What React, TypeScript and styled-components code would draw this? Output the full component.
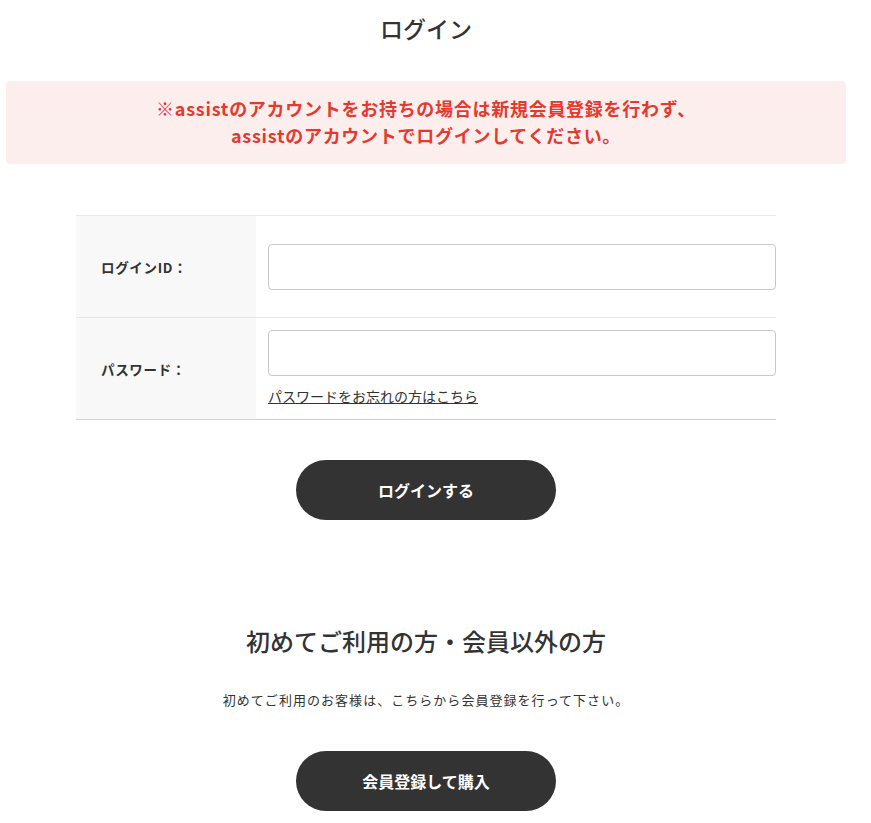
import React from 'react';
import styled, { createGlobalStyle } from 'styled-components';

const GlobalStyle = createGlobalStyle`
  body {
    margin: 0;
    background: #fff;
    color: #333;
    font-family: "Noto Sans CJK JP", "Noto Sans", sans-serif;
  }
  * { box-sizing: border-box; }
`;

const Page = styled.main`
  width: 840px;
  margin-left: 6px;
  padding-bottom: 12px;
`;

const Title = styled.h1`
  margin: 0;
  padding-top: 11px;
  font-size: 23px;
  line-height: 34px;
  font-weight: 500;
  text-align: center;
`;

const Notice = styled.div`
  margin-top: 36px;
  background: #fdeeee;
  border-radius: 4px;
  padding: 14px 0 15px;
  color: #e5392e;
  font-size: 18px;
  letter-spacing: 0.04em;
  font-weight: 700;
  line-height: 27px;
  text-align: center;
`;

const FormTable = styled.div`
  width: 700px;
  margin: 51px auto 0;
  border-top: 1px solid #e6e6e6;
  border-bottom: 1px solid #d2d2d2;
`;

const Row = styled.div`
  display: flex;
  & + & {
    border-top: 1px solid #e6e6e6;
  }
`;

const Label = styled.div`
  width: 180px;
  flex-shrink: 0;
  background: #f8f8f8;
  padding-left: 25px;
  display: flex;
  align-items: center;
  font-size: 13.5px;
  letter-spacing: 0.05em;
  font-weight: 700;
`;

const Field = styled.div<{ $top: number; $bottom: number }>`
  flex: 1;
  padding: ${p => p.$top}px 0 ${p => p.$bottom}px 12px;
`;

const Input = styled.input`
  display: block;
  width: 100%;
  height: 46px;
  border: 1px solid #c8c8c8;
  border-radius: 4px;
  outline: none;
  padding: 0 12px;
  font-size: 14px;
`;

const Forgot = styled.a`
  display: inline-block;
  margin-top: 10px;
  font-size: 14px;
  line-height: 20px;
  color: #333;
  text-decoration: underline;
`;

const PillButton = styled.button<{ $top: number }>`
  display: block;
  width: 260px;
  height: 60px;
  margin: ${p => p.$top}px auto 0;
  background: #333;
  color: #fff;
  border: none;
  border-radius: 30px;
  font-family: inherit;
  font-size: 16px;
  font-weight: 700;
  cursor: pointer;
`;

const SubTitle = styled.h2`
  margin: 103px 0 0;
  font-size: 24px;
  line-height: 36px;
  font-weight: 500;
  text-align: center;
`;

const Lead = styled.p`
  margin: 31px 0 0;
  font-size: 13px;
  letter-spacing: 0.08em;
  line-height: 20px;
  text-align: center;
`;

export default function App() {
  return (
    <>
      <GlobalStyle />
      <Page>
        <Title>ログイン</Title>
        <Notice>
          ※assistのアカウントをお持ちの場合は新規会員登録を行わず、
          <br />
          assistのアカウントでログインしてください。
        </Notice>
        <FormTable>
          <Row>
            <Label>ログインID：</Label>
            <Field $top={28} $bottom={27}>
              <Input type="text" />
            </Field>
          </Row>
          <Row>
            <Label>パスワード：</Label>
            <Field $top={12} $bottom={12}>
              <Input type="password" />
              <Forgot href="#">パスワードをお忘れの方はこちら</Forgot>
            </Field>
          </Row>
        </FormTable>
        <PillButton $top={40}>ログインする</PillButton>
        <SubTitle>初めてご利用の方・会員以外の方</SubTitle>
        <Lead>初めてご利用のお客様は、こちらから会員登録を行って下さい。</Lead>
        <PillButton $top={41}>会員登録して購入</PillButton>
      </Page>
    </>
  );
}
